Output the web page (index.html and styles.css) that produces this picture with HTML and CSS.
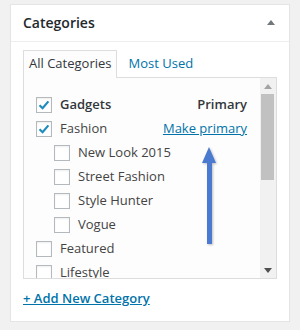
FILE: index.html
```html
<!DOCTYPE html>
<html lang="en">
<head>
    <meta charset="UTF-8">
    <meta name="viewport" content="width=device-width, initial-scale=1.0">
    <title>Categories</title>
    <link rel="stylesheet" href="styles.css">
</head>
<body>
    <div class="postbox">
        <div class="hndle">
            <h2>Categories</h2>
            <svg class="toggle" width="8" height="5" viewBox="0 0 8 5"><polygon points="4,0 8,5 0,5" fill="#72777c"/></svg>
        </div>
        <div class="inside">
            <ul class="category-tabs">
                <li class="tabs">All Categories</li>
                <li><a href="#">Most Used</a></li>
            </ul>
            <div class="tabs-panel">
                <ul class="categorychecklist">
                    <li class="cat-row primary">
                        <span class="cb checked"><svg width="14" height="14" viewBox="0 0 14 14"><path d="M2.5 7.2 L5.6 10.2 L11.4 3.4" fill="none" stroke="#1e8cbe" stroke-width="2.2"/></svg></span>
                        <span class="label">Gadgets</span>
                        <span class="primary-label">Primary</span>
                    </li>
                    <li class="cat-row">
                        <span class="cb checked"><svg width="14" height="14" viewBox="0 0 14 14"><path d="M2.5 7.2 L5.6 10.2 L11.4 3.4" fill="none" stroke="#1e8cbe" stroke-width="2.2"/></svg></span>
                        <span class="label">Fashion</span>
                        <a class="make-primary" href="#">Make primary</a>
                    </li>
                    <li class="cat-row child"><span class="cb"></span><span class="label">New Look 2015</span></li>
                    <li class="cat-row child"><span class="cb"></span><span class="label">Street Fashion</span></li>
                    <li class="cat-row child"><span class="cb"></span><span class="label">Style Hunter</span></li>
                    <li class="cat-row child"><span class="cb"></span><span class="label">Vogue</span></li>
                    <li class="cat-row"><span class="cb"></span><span class="label">Featured</span></li>
                    <li class="cat-row"><span class="cb"></span><span class="label">Lifestyle</span></li>
                </ul>
                <div class="scrollbar">
                    <div class="sb-btn"><svg width="8" height="5" viewBox="0 0 8 5"><polygon points="4,0 8,5 0,5" fill="#a3a3a3"/></svg></div>
                    <div class="sb-thumb"></div>
                    <div class="sb-btn sb-down"><svg width="8" height="5" viewBox="0 0 8 5"><polygon points="0,0 8,0 4,5" fill="#505050"/></svg></div>
                </div>
                <svg class="pointer" width="16" height="100" viewBox="0 0 16 100">
                    <polygon points="7,0 14,16 10,16 10,97 5,97 5,16 0,16" fill="#4a7bd0"/>
                </svg>
            </div>
            <h4 class="adder"><a href="#">+ Add New Category</a></h4>
        </div>
    </div>
</body>
</html>
```

FILE: styles.css
```css
body {
    margin: 0;
    padding: 4px 0 0 10px;
    background: #f1f1f1;
    font-family: "Open Sans", Arial, sans-serif;
    font-size: 13px;
    line-height: 1.5;
    color: #444;
}
.postbox {
    width: 280px;
    box-sizing: border-box;
    background: #fff;
    border: 1px solid #e5e5e5;
    box-shadow: 0 1px 1px rgba(0, 0, 0, 0.04);
}
.hndle {
    display: flex;
    align-items: center;
    justify-content: space-between;
    padding: 8px 12px;
    border-bottom: 1px solid #eee;
}
.hndle h2 {
    margin: 0;
    font-size: 14px;
    font-weight: 600;
    line-height: 1.4;
    color: #23282d;
}
.toggle {
    margin-right: 2px;
}
.inside {
    padding: 8px 12px 12px;
}
.category-tabs {
    display: flex;
    margin: 0 0 -1px;
    padding: 0;
    list-style: none;
    position: relative;
    z-index: 1;
}
.category-tabs li {
    padding: 3px 5px 5px;
    margin-right: 5px;
    border: 1px solid transparent;
    border-bottom: none;
}
.category-tabs li.tabs {
    border-color: #ddd;
    background: #fdfdfd;
    color: #32373c;
}
.category-tabs a {
    color: #0073aa;
    text-decoration: none;
}
.tabs-panel {
    position: relative;
    display: flex;
    height: 202px;
    box-sizing: border-box;
    border: 1px solid #ddd;
    background: #fdfdfd;
}
.categorychecklist {
    flex: 1;
    margin: 0;
    padding: 15px 13px 0 12px;
    list-style: none;
    overflow: hidden;
}
.cat-row {
    display: flex;
    align-items: center;
    height: 24px;
}
.cat-row.child {
    padding-left: 18px;
}
.cb {
    display: flex;
    align-items: center;
    justify-content: center;
    width: 16px;
    height: 16px;
    box-sizing: border-box;
    margin-right: 8px;
    border: 1px solid #b4b9be;
    background: #fff;
    box-shadow: inset 0 1px 2px rgba(0, 0, 0, 0.07);
}
.label {
    flex: 1;
    white-space: nowrap;
}
.primary .label,
.primary-label {
    font-weight: 600;
    color: #32373c;
}
.make-primary {
    color: #0073aa;
}
.scrollbar {
    display: flex;
    flex-direction: column;
    width: 16px;
    background: #f1f1f1;
}
.sb-btn {
    display: flex;
    align-items: center;
    justify-content: center;
    height: 16px;
}
.sb-thumb {
    height: 86px;
    margin: 0 2px 0 1px;
    background: #c1c1c1;
}
.sb-down {
    margin-top: auto;
}
.pointer {
    position: absolute;
    left: 178px;
    top: 69px;
    filter: drop-shadow(1px 1px 1px rgba(0, 0, 0, 0.25));
}
.adder {
    margin: 10px 0 0;
    font-size: 13px;
    font-weight: 600;
}
.adder a {
    color: #0073aa;
}
```
